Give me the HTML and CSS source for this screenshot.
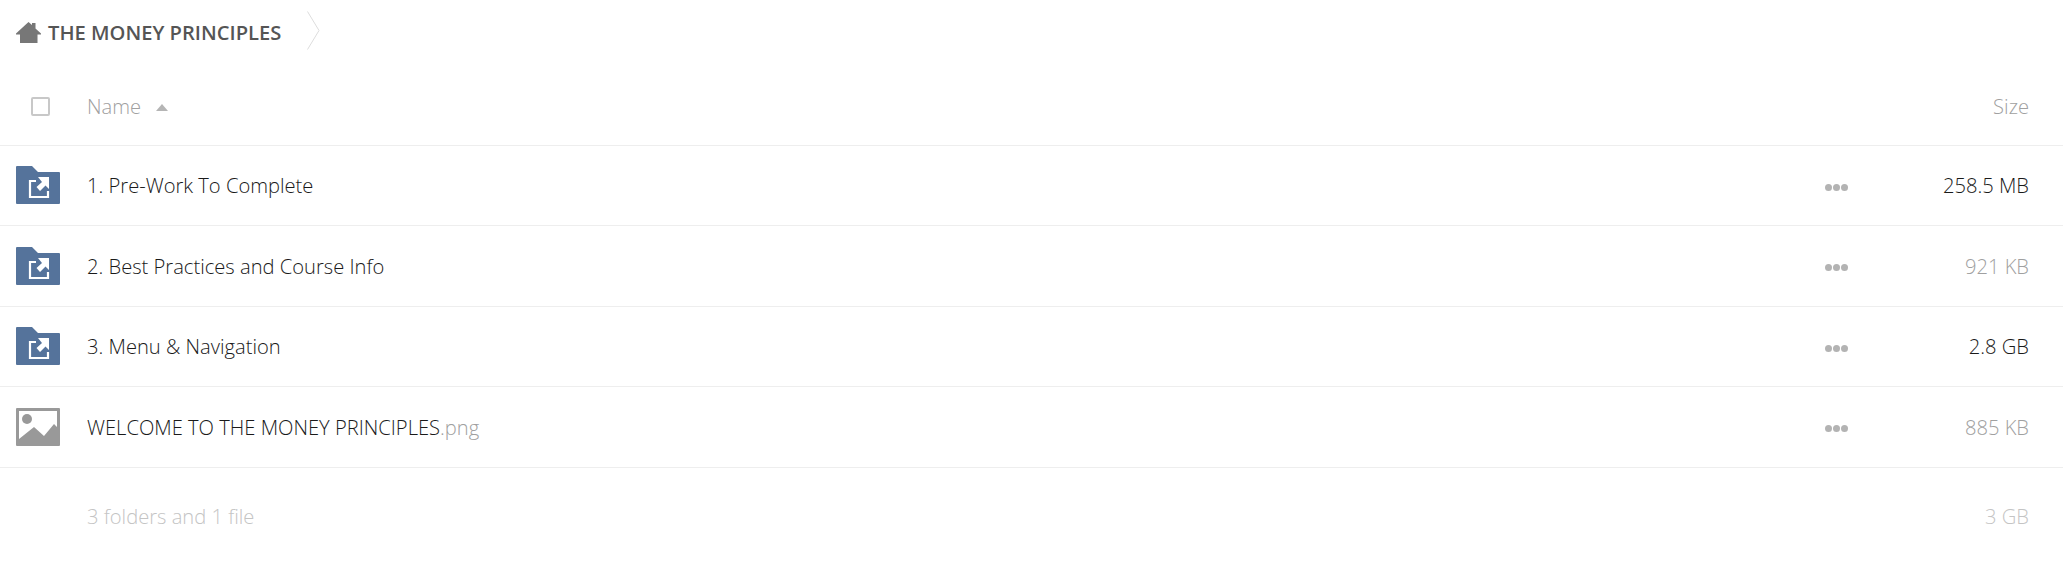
FILE: index.html
```html
<!DOCTYPE html>
<html lang="en">
<head>
  <meta charset="UTF-8">
  <meta name="viewport" content="width=device-width, initial-scale=1.0">
  <title>The Money Principles</title>
  <link rel="stylesheet" href="styles.css">
</head>
<body>
  <div class="breadcrumb">
    <svg class="home-icon" viewBox="0 0 25 22" width="25" height="22">
      <path d="M0 12.5 L12.5 1 L16 4 V2 H19.5 V7.5 L25 12.5 V13.5 H21.5 V22 H4 V13.5 H0 Z" fill="#777"/>
    </svg>
    <span class="crumb-name">THE MONEY PRINCIPLES</span>
    <svg class="crumb-arrow" viewBox="0 0 13 39" width="13" height="39">
      <path d="M0.5 0.5 L12 19.5 L0.5 38.5" fill="none" stroke="#ddd" stroke-width="1"/>
    </svg>
  </div>

  <div class="row header-row">
    <div class="col-icon"><span class="checkbox"></span></div>
    <div class="col-name">Name <span class="sort-arrow"></span></div>
    <div class="col-size">Size</div>
  </div>

  <div class="row">
    <div class="col-icon">
      <svg class="file-icon" viewBox="0 0 44 38" width="44" height="38">
        <path class="folder" d="M1 0 H16 L22 6 H43 Q44 6 44 7 V37 Q44 38 43 38 H1 Q0 38 0 37 V1 Q0 0 1 0 Z"/>
        <path class="share-box" d="M20 15 H14 V31 H32 V25"/>
        <path class="share-arrow" d="M33 11 V23 L29.5 19.5 L24 25 L20.5 21 L26 16 L22 11 Z"/>
      </svg>
    </div>
    <div class="col-name">1. Pre-Work To Complete</div>
    <div class="col-more"><span class="dots"><i></i><i></i><i></i></span></div>
    <div class="col-size">258.5 MB</div>
  </div>

  <div class="row">
    <div class="col-icon">
      <svg class="file-icon" viewBox="0 0 44 38" width="44" height="38">
        <path class="folder" d="M1 0 H16 L22 6 H43 Q44 6 44 7 V37 Q44 38 43 38 H1 Q0 38 0 37 V1 Q0 0 1 0 Z"/>
        <path class="share-box" d="M20 15 H14 V31 H32 V25"/>
        <path class="share-arrow" d="M33 11 V23 L29.5 19.5 L24 25 L20.5 21 L26 16 L22 11 Z"/>
      </svg>
    </div>
    <div class="col-name">2. Best Practices and Course Info</div>
    <div class="col-more"><span class="dots"><i></i><i></i><i></i></span></div>
    <div class="col-size faded">921 KB</div>
  </div>

  <div class="row">
    <div class="col-icon">
      <svg class="file-icon" viewBox="0 0 44 38" width="44" height="38">
        <path class="folder" d="M1 0 H16 L22 6 H43 Q44 6 44 7 V37 Q44 38 43 38 H1 Q0 38 0 37 V1 Q0 0 1 0 Z"/>
        <path class="share-box" d="M20 15 H14 V31 H32 V25"/>
        <path class="share-arrow" d="M33 11 V23 L29.5 19.5 L24 25 L20.5 21 L26 16 L22 11 Z"/>
      </svg>
    </div>
    <div class="col-name">3. Menu &amp; Navigation</div>
    <div class="col-more"><span class="dots"><i></i><i></i><i></i></span></div>
    <div class="col-size">2.8 GB</div>
  </div>

  <div class="row">
    <div class="col-icon">
      <svg class="file-icon" viewBox="0 0 44 38" width="44" height="38">
        <rect width="44" height="38" rx="1" fill="#999"/>
        <rect x="3" y="3" width="38" height="31" fill="#fff"/>
        <circle cx="11" cy="11" r="5" fill="#999"/>
        <path d="M3 34 V31 L18 19 L28 28 L38 16 L41 19 V34 Z" fill="#999"/>
      </svg>
    </div>
    <div class="col-name">WELCOME TO THE MONEY PRINCIPLES<span class="ext">.png</span></div>
    <div class="col-more"><span class="dots"><i></i><i></i><i></i></span></div>
    <div class="col-size faded">885 KB</div>
  </div>

  <div class="row summary-row">
    <div class="col-icon"></div>
    <div class="col-name">3 folders and 1 file</div>
    <div class="col-size">3 GB</div>
  </div>
</body>
</html>
```

FILE: styles.css
```css
/* Page */
body {
  margin: 0;
  background-color: #fff;
  font-family: "Open Sans", sans-serif;
  font-size: 20.15px;
  font-weight: 300;
  color: #1a1a1a;
}

/* Breadcrumb */
.breadcrumb {
  display: flex;
  align-items: center;
  height: 65px;
  padding-left: 16px;
}

.home-icon {
  margin-top: -2px;
}

.crumb-name {
  margin-left: 7px;
  margin-right: 26px;
  margin-bottom: 2px;
  font-size: 20.15px;
  font-weight: 600;
  color: #555;
}

.crumb-arrow {
  margin-top: -4px;
}

/* Rows */
.row {
  display: flex;
  align-items: center;
  height: 80.5px;
  box-sizing: border-box;
  border-bottom: 1px solid #eee;
}

.col-icon {
  display: flex;
  align-items: center;
  width: 87px;
  padding-left: 16px;
  box-sizing: border-box;
  flex-shrink: 0;
}

.col-name {
  flex: 1;
  white-space: nowrap;
}

.col-more {
  width: 88px;
  display: flex;
  align-items: center;
}

.col-size {
  width: 150px;
  padding-right: 34px;
  text-align: right;
  box-sizing: border-box;
}

.faded {
  color: #a0a0a0;
}

.ext {
  color: #a0a0a0;
}

/* Header */
.header-row {
  color: #a0a0a0;
  padding-top: 2px;
}

.checkbox {
  display: block;
  width: 19px;
  height: 19px;
  margin-left: 15px;
  margin-top: 2px;
  box-sizing: border-box;
  border: 2px solid #c8c8c8;
  border-radius: 2px;
}

.sort-arrow {
  display: inline-block;
  margin-left: 10px;
  vertical-align: 3px;
  border-left: 6.5px solid transparent;
  border-right: 6.5px solid transparent;
  border-bottom: 7px solid #b5b5b5;
}

/* Icons */
.file-icon {
  display: block;
}

.folder {
  fill: #55739b;
}

.share-box {
  fill: none;
  stroke: #fff;
  stroke-width: 2.2;
}

.share-arrow {
  fill: #fff;
}

.dots {
  display: flex;
  gap: 1px;
  margin-top: 4px;
}

.dots i {
  display: block;
  width: 7px;
  height: 7px;
  border-radius: 50%;
  background-color: #b3b3b3;
}

/* Summary */
.summary-row {
  height: 96px;
  color: #c4c4c4;
  border-bottom: none;
}
```
